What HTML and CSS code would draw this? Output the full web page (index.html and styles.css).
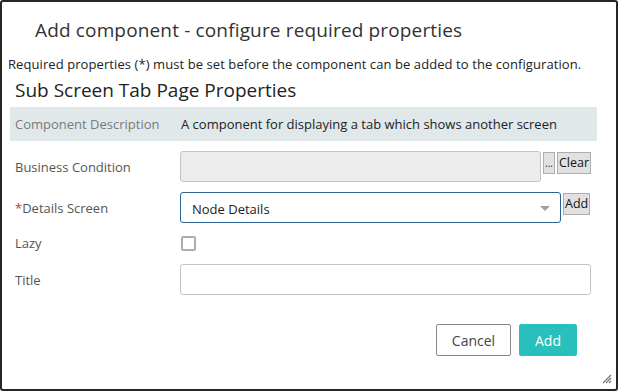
FILE: index.html
```html
<!DOCTYPE html>
<html lang="en">
<head>
    <meta charset="UTF-8">
    <title>Add component</title>
    <link rel="stylesheet" href="styles.css">
</head>
<body>
    <div class="dialog">
        <h1 class="dialog-title">Add component - configure required properties</h1>
        <p class="hint">Required properties (*) must be set before the component can be added to the configuration.</p>
        <h2 class="section-title">Sub Screen Tab Page Properties</h2>

        <div class="desc-row">
            <span class="desc-label">Component Description</span>
            <span class="desc-value">A component for displaying a tab which shows another screen</span>
        </div>

        <div class="prop-row">
            <label class="prop-label">Business Condition</label>
            <div class="prop-field">
                <div class="text-input disabled wide-cond"></div>
                <button class="small-btn dots">...</button>
                <button class="small-btn">Clear</button>
            </div>
        </div>

        <div class="prop-row">
            <label class="prop-label"><span class="req">*</span>Details Screen</label>
            <div class="prop-field">
                <div class="text-input select focused">
                    <span>Node Details</span>
                    <span class="caret"></span>
                </div>
                <button class="small-btn">Add</button>
            </div>
        </div>

        <div class="prop-row short">
            <label class="prop-label">Lazy</label>
            <div class="prop-field">
                <span class="checkbox"></span>
            </div>
        </div>

        <div class="prop-row">
            <label class="prop-label">Title</label>
            <div class="prop-field">
                <div class="text-input full"></div>
            </div>
        </div>

        <div class="actions">
            <button class="btn btn-cancel">Cancel</button>
            <button class="btn btn-add">Add</button>
        </div>

        <svg class="resize-grip" width="12" height="12" viewBox="0 0 12 12">
            <path d="M11 3 L3 11 M11 6 L6 11 M11 9 L9 11" stroke="#777" stroke-width="1.2"/>
        </svg>
    </div>
</body>
</html>
```

FILE: styles.css
```css
* {
    box-sizing: border-box;
}

body {
    margin: 0;
    padding: 0;
    background-color: #ffffff;
    font-family: "Segoe UI", "Open Sans", sans-serif;
    color: #333;
}

.dialog {
    position: relative;
    width: 618px;
    height: 391px;
    border: 2px solid #262626;
    border-radius: 3px;
    background-color: #fff;
    padding: 0 0 0 6px;
}

.dialog-title {
    font-size: 19px;
    font-weight: normal;
    margin: 0;
    padding: 15px 0 0 27px;
    height: 53px;
    color: #333;
    letter-spacing: 0.15px;
}

.hint {
    font-size: 13px;
    margin: 0;
    height: 22px;
    color: #222;
    letter-spacing: 0.08px;
}

.section-title {
    font-size: 19px;
    font-weight: normal;
    margin: 0 0 0 7px;
    height: 30px;
    color: #222;
}

.desc-row {
    display: flex;
    align-items: center;
    background-color: #e1e8ea;
    height: 34px;
    margin: 0 19px 0 2px;
    padding-left: 5px;
    font-size: 13px;
}

.desc-label {
    width: 166px;
    color: #7a7a7a;
}

.desc-value {
    color: #222;
}

.prop-row {
    display: flex;
    align-items: center;
    height: 31px;
    margin-top: 10px;
    font-size: 13px;
}

.prop-row.short {
    height: 14px;
    margin-top: 13px;
}

.prop-row.short + .prop-row {
    margin-top: 14px;
}

.prop-label {
    width: 172px;
    padding-left: 7px;
    color: #555;
}

.req {
    color: #c0392b;
}

.prop-field {
    display: flex;
    align-items: flex-start;
    height: 100%;
}

.text-input {
    height: 31px;
    border: 1px solid #c4c4c4;
    border-radius: 3px;
    background-color: #fff;
}

.text-input.disabled {
    background-color: #ececec;
}

.wide-cond {
    width: 361px;
}

.text-input.full {
    width: 411px;
}

.text-input.select {
    width: 381px;
    display: flex;
    align-items: center;
    justify-content: space-between;
    padding: 2px 10px 0 11px;
    color: #222;
}

.text-input.focused {
    border-color: #2a6496;
}

.caret {
    width: 0;
    height: 0;
    border-left: 5px solid transparent;
    border-right: 5px solid transparent;
    border-top: 5px solid #a0a0a0;
}

.small-btn {
    font-family: inherit;
    font-size: 12.5px;
    height: 22px;
    margin: 1px 0 0 2px;
    padding: 0 1px;
    background-color: #e1e1e1;
    border: 1px solid #adadad;
    border-radius: 0;
    color: #111;
    line-height: 18px;
}

.small-btn.dots {
    width: 12px;
    padding: 0;
    font-size: 10px;
}

.checkbox {
    display: block;
    width: 15px;
    height: 15px;
    margin: 0 0 0 1px;
    border: 2px solid #a9b0a8;
    border-radius: 2px;
}

.actions {
    display: flex;
    justify-content: flex-end;
    gap: 8px;
    margin: 29px 39px 0 0;
}

.btn {
    font-family: inherit;
    font-size: 14px;
    height: 32px;
    border-radius: 2px;
    cursor: pointer;
}

.btn-cancel {
    width: 75px;
    background-color: #fff;
    border: 1px solid #8a8a8a;
    color: #444;
}

.btn-add {
    width: 58px;
    background-color: #28bfbd;
    border: 1px solid #28bfbd;
    color: #fff;
}

.resize-grip {
    position: absolute;
    right: 4px;
    bottom: 5px;
}
```
